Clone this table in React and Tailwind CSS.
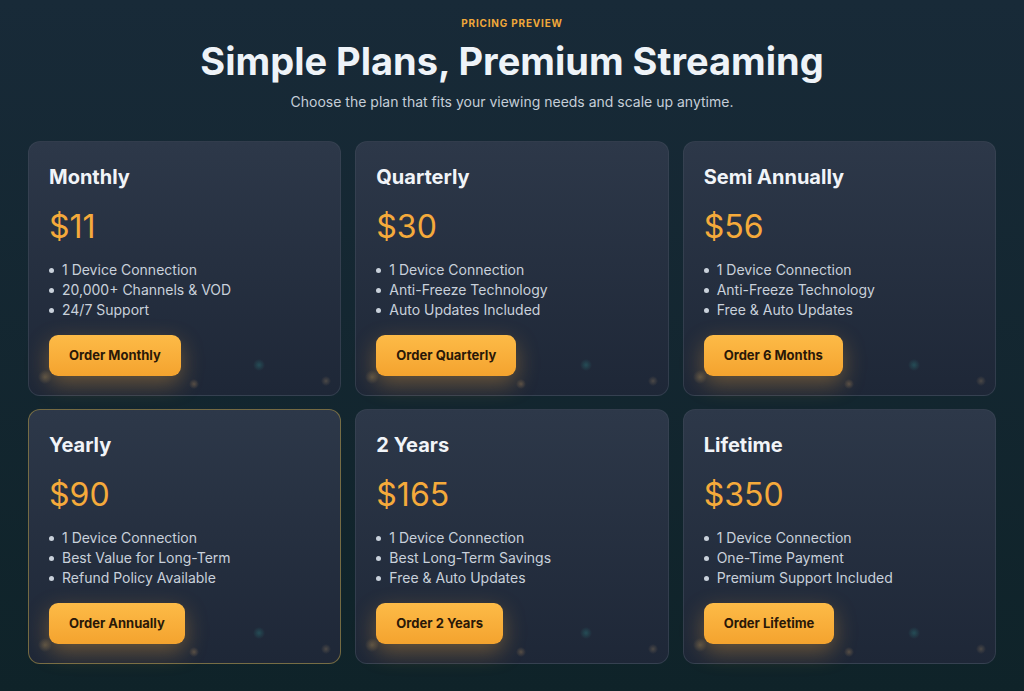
import React from "react";

const plans = [
  {
    name: "Monthly",
    price: "$11",
    features: ["1 Device Connection", "20,000+ Channels & VOD", "24/7 Support"],
    cta: "Order Monthly",
  },
  {
    name: "Quarterly",
    price: "$30",
    features: ["1 Device Connection", "Anti-Freeze Technology", "Auto Updates Included"],
    cta: "Order Quarterly",
  },
  {
    name: "Semi Annually",
    price: "$56",
    features: ["1 Device Connection", "Anti-Freeze Technology", "Free & Auto Updates"],
    cta: "Order 6 Months",
  },
  {
    name: "Yearly",
    price: "$90",
    features: ["1 Device Connection", "Best Value for Long-Term", "Refund Policy Available"],
    cta: "Order Annually",
    featured: true,
  },
  {
    name: "2 Years",
    price: "$165",
    features: ["1 Device Connection", "Best Long-Term Savings", "Free & Auto Updates"],
    cta: "Order 2 Years",
  },
  {
    name: "Lifetime",
    price: "$350",
    features: ["1 Device Connection", "One-Time Payment", "Premium Support Included"],
    cta: "Order Lifetime",
  },
];

// card surface: soft bokeh dots near the bottom over a vertical gradient
const cardBg =
  "bg-[radial-gradient(circle_at_16px_235px,rgba(150,125,85,0.45)_0,rgba(150,125,85,0)_7px),radial-gradient(circle_at_165px_242px,rgba(140,115,85,0.5)_0,rgba(140,115,85,0)_5px),radial-gradient(circle_at_230px_223px,rgba(40,100,105,0.6)_0,rgba(40,100,105,0)_6px),radial-gradient(circle_at_297px_239px,rgba(120,105,85,0.5)_0,rgba(120,105,85,0)_5px),linear-gradient(to_bottom,#2d3849,#1e2737)]";

function PlanCard({ plan }) {
  return (
    <div
      className={
        "flex h-[255px] flex-col items-start rounded-[12px] border px-5 pt-[21px] " +
        cardBg +
        " " +
        (plan.featured ? "border-[#8a7a45]/80" : "border-[#3a4656]/70")
      }
    >
      <h3 className="text-[20px] leading-[28px] font-bold text-[#f1f4f8]">{plan.name}</h3>
      <div className="mt-[18px] text-[32px] leading-[36px] font-normal text-[#f5aa3b]">{plan.price}</div>
      <ul className="mt-[15px] flex flex-col">
        {plan.features.map((f) => (
          <li key={f} className="flex items-center gap-[8px] text-[14px] leading-[20px] text-[#c9d1db]">
            <span className="h-[5px] w-[5px] rounded-full bg-[#c9d1db]" />
            {f}
          </li>
        ))}
      </ul>
      <button className="mt-[15px] h-[41px] rounded-[9px] bg-gradient-to-b from-[#fdbb47] to-[#f4a32e] px-[20px] text-[13px] font-bold text-[#2a1808] shadow-[0_8px_22px_rgba(245,170,60,0.35)]">
        {plan.cta}
      </button>
    </div>
  );
}

export default function App() {
  return (
    <div
      className="min-h-[691px] w-full bg-gradient-to-b from-[#182a38] to-[#0f2329] px-[28px] pt-[16px] pb-[26px]"
      style={{ fontFamily: "Inter, 'Noto Sans', sans-serif" }}
    >
      <div className="text-center">
        <div className="text-[10px] font-bold tracking-[0.08em] text-[#f0a83a]">PRICING PREVIEW</div>
        <h1 className="mt-[7px] text-[38px] leading-[46px] font-bold text-[#eef3f8]">
          Simple Plans, Premium Streaming
        </h1>
        <p className="mt-[8px] text-[14px] leading-[20px] text-[#c5ced8]">
          Choose the plan that fits your viewing needs and scale up anytime.
        </p>
      </div>
      <div className="mt-[29px] grid grid-cols-3 gap-x-[14px] gap-y-[13px]">
        {plans.map((p) => (
          <PlanCard key={p.name} plan={p} />
        ))}
      </div>
    </div>
  );
}
